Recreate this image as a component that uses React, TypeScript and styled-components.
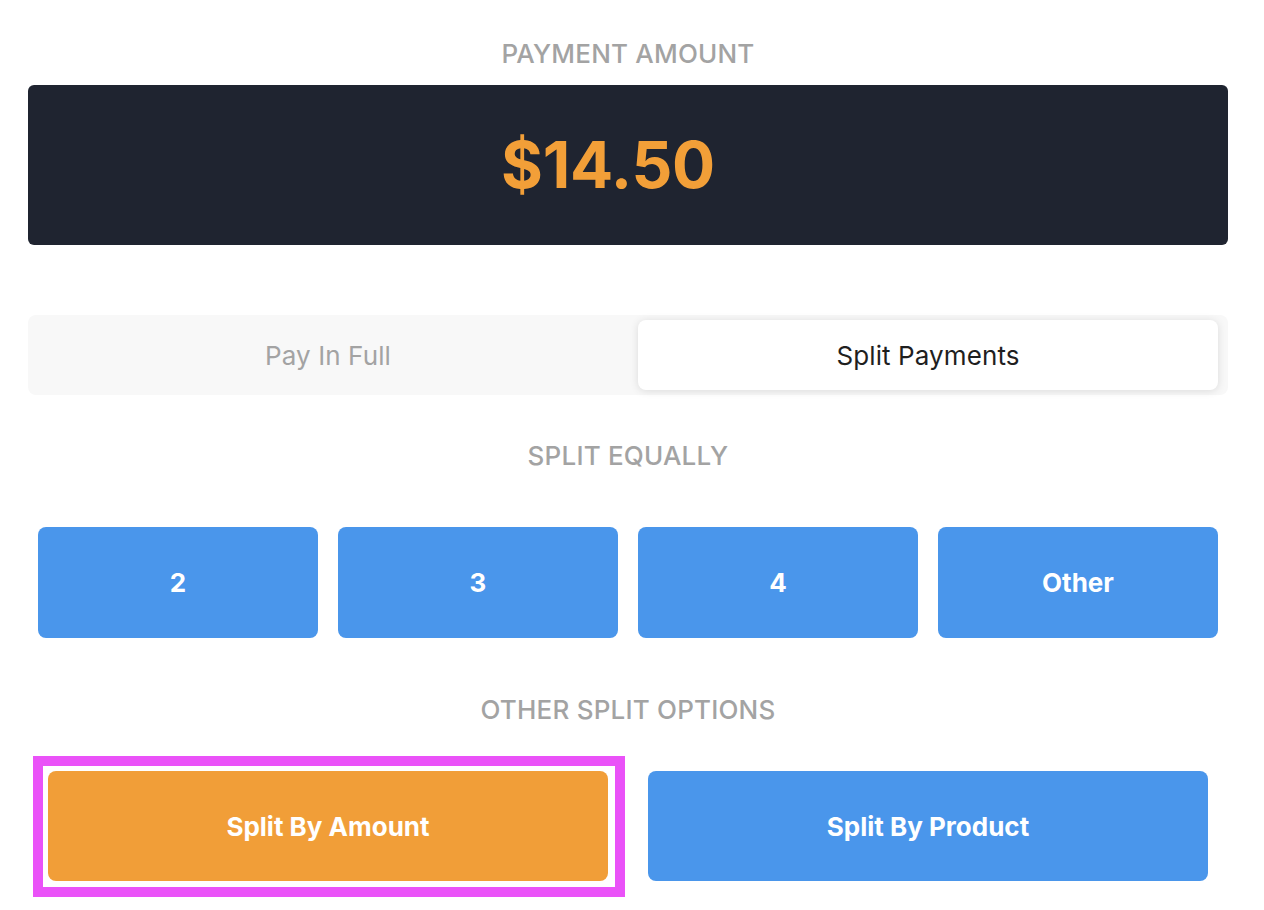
import React, { useState } from "react";
import styled, { createGlobalStyle } from "styled-components";

const GlobalStyle = createGlobalStyle`
  html, body {
    margin: 0;
    padding: 0;
    background: #ffffff;
    font-family: Inter, "Noto Sans", "Liberation Sans", sans-serif;
  }
  * { box-sizing: border-box; }
`;

const Page = styled.div`
  width: 1200px;
  margin-left: 28px;
  padding-top: 39px;
  padding-bottom: 29px;
  display: flex;
  flex-direction: column;
`;

const SectionTitle = styled.div<{ $mt: number; $mb: number }>`
  margin-top: ${(p) => p.$mt}px;
  margin-bottom: ${(p) => p.$mb}px;
  height: 30px;
  line-height: 30px;
  text-align: center;
  font-size: 26px;
  font-weight: 500;
  color: #a3a3a3;
  letter-spacing: 0.2px;
  text-transform: uppercase;
`;

const AmountBox = styled.div`
  height: 160px;
  border-radius: 6px;
  background: #1f2430;
  display: flex;
  align-items: center;
  justify-content: center;
  padding-right: 40px;
`;

const Amount = styled.div`
  color: #f29f38;
  font-size: 64px;
  font-weight: 700;
  letter-spacing: -0.3px;
  line-height: 1;
`;

const Tabs = styled.div`
  margin-top: 70px;
  height: 80px;
  padding: 5px 10px;
  background: #f8f8f8;
  border-radius: 8px;
  display: grid;
  grid-template-columns: 1fr 1fr;
  gap: 20px;
`;

const Tab = styled.button<{ $active?: boolean }>`
  border: none;
  border-radius: 8px;
  font-family: inherit;
  font-size: 26px;
  font-weight: 400;
  letter-spacing: 0.1px;
  cursor: pointer;
  background: ${(p) => (p.$active ? "#ffffff" : "transparent")};
  color: ${(p) => (p.$active ? "#1f1f1f" : "#a3a3a3")};
  box-shadow: ${(p) => (p.$active ? "0 1px 8px rgba(0,0,0,0.12)" : "none")};
`;

const EqualGrid = styled.div`
  padding: 0 10px;
  display: grid;
  grid-template-columns: repeat(4, 1fr);
  gap: 20px;
`;

const OptionGrid = styled.div`
  padding: 0 20px;
  display: grid;
  grid-template-columns: 1fr 1fr;
  gap: 40px;
`;

const ActionButton = styled.button<{ $tone: "blue" | "orange"; $h: number; $focused?: boolean }>`
  position: relative;
  height: ${(p) => p.$h}px;
  border: none;
  border-radius: 8px;
  background: ${(p) => (p.$tone === "orange" ? "#f19e38" : "#4a96eb")};
  color: #ffffff;
  font-family: inherit;
  font-size: 26px;
  font-weight: 700;
  letter-spacing: 0px;
  cursor: pointer;
  outline: none;
  overflow: visible;

  &::after {
    content: "";
    display: ${(p) => (p.$focused ? "block" : "none")};
    position: absolute;
    left: -15px;
    right: -17px;
    top: -15px;
    bottom: -16px;
    border: 10px solid #ea52f8;
    pointer-events: none;
  }
`;

export default function App() {
  const [tab, setTab] = useState(1);
  return (
    <>
      <GlobalStyle />
      <Page>
        <SectionTitle $mt={0} $mb={16}>Payment Amount</SectionTitle>
        <AmountBox>
          <Amount>$14.50</Amount>
        </AmountBox>
        <Tabs>
          <Tab $active={tab === 0} onClick={() => setTab(0)}>Pay In Full</Tab>
          <Tab $active={tab === 1} onClick={() => setTab(1)}>Split Payments</Tab>
        </Tabs>
        <SectionTitle $mt={46} $mb={56}>Split Equally</SectionTitle>
        <EqualGrid>
          {["2", "3", "4", "Other"].map((l) => (
            <ActionButton key={l} $tone="blue" $h={111}>{l}</ActionButton>
          ))}
        </EqualGrid>
        <SectionTitle $mt={57} $mb={46}>Other Split Options</SectionTitle>
        <OptionGrid>
          <ActionButton $tone="orange" $h={110} $focused>Split By Amount</ActionButton>
          <ActionButton $tone="blue" $h={110}>Split By Product</ActionButton>
        </OptionGrid>
      </Page>
    </>
  );
}
